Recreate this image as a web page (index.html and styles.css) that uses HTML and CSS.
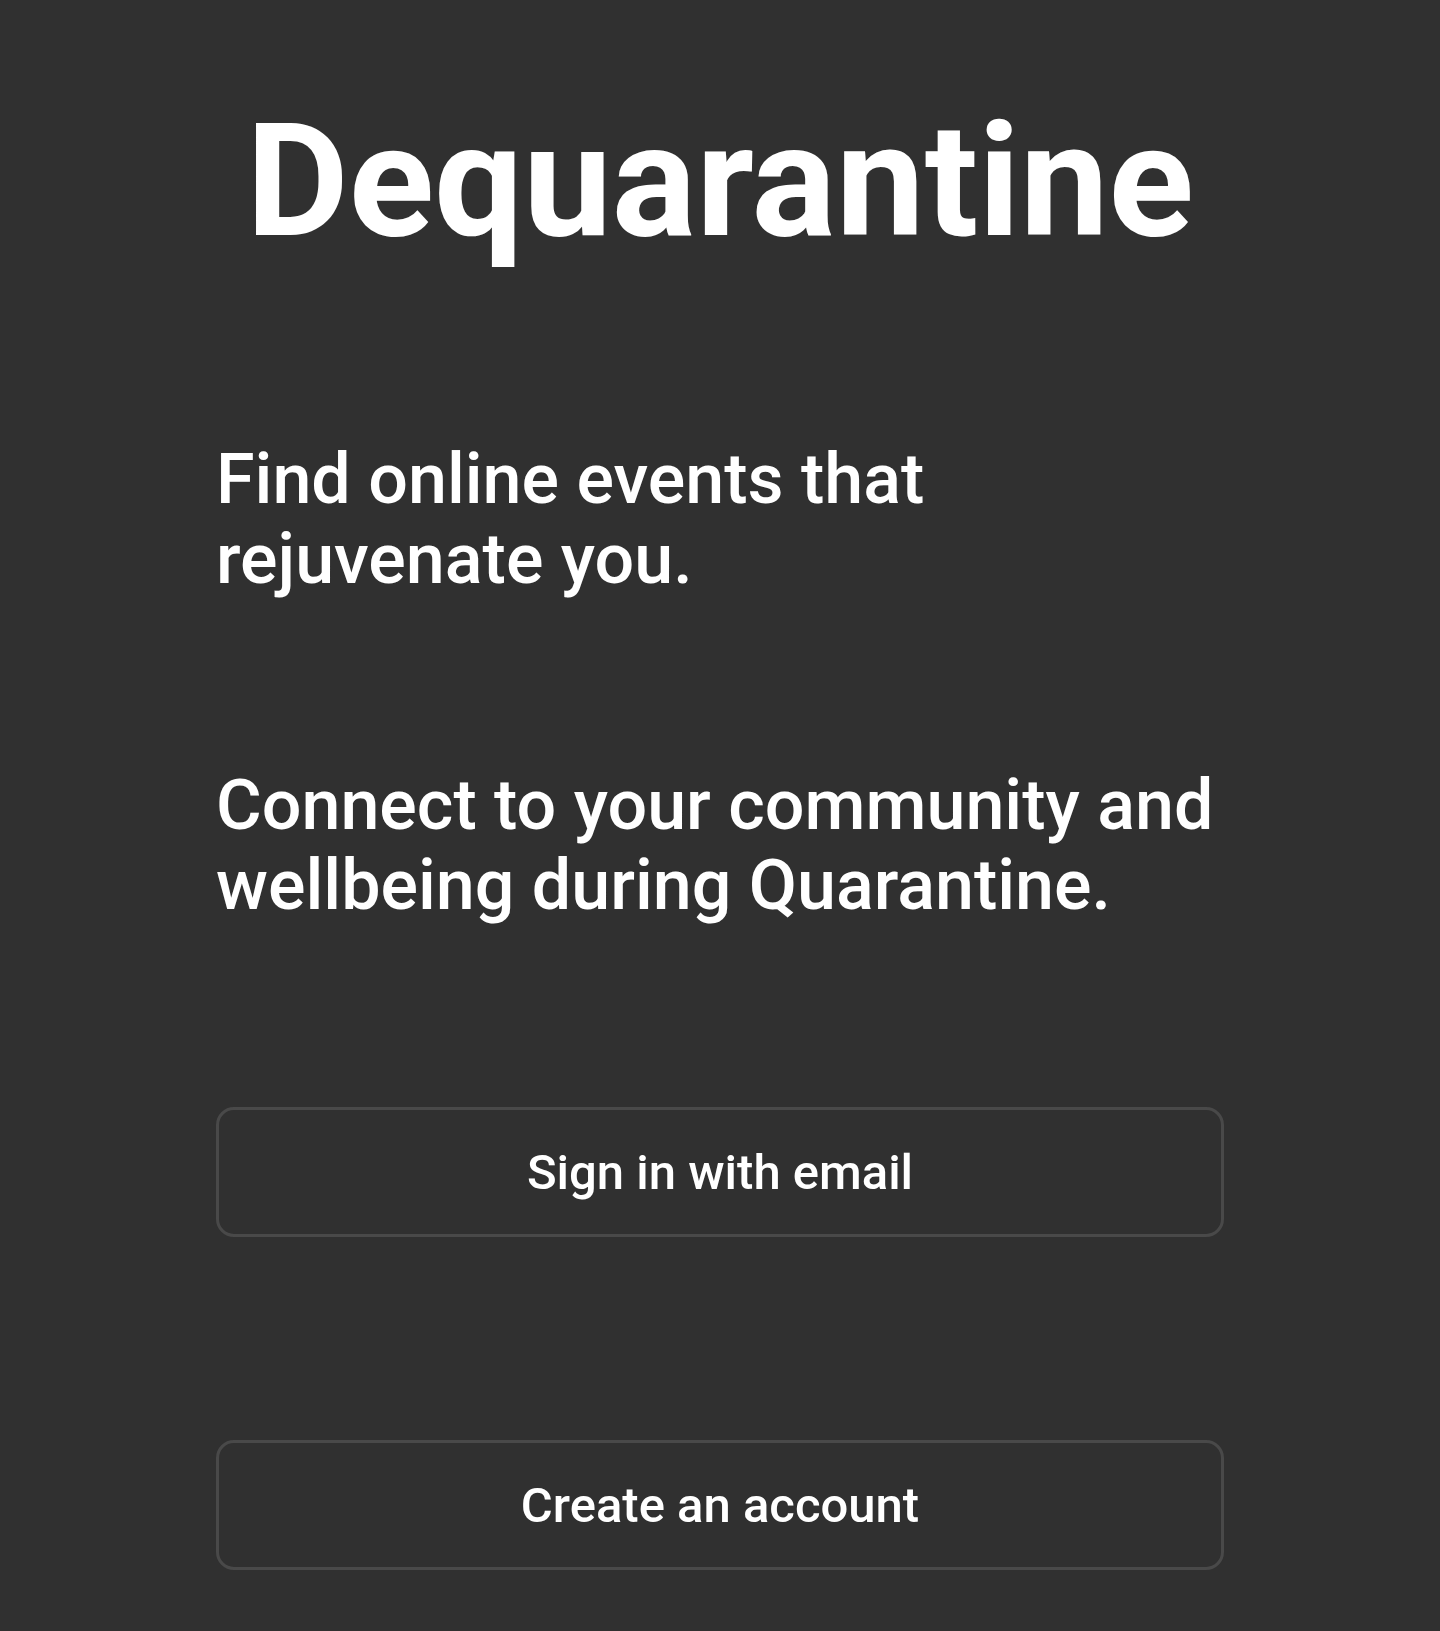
FILE: index.html
```html
<!DOCTYPE html>
<html lang="en">
<head>
<meta charset="utf-8">
<title>Dequarantine</title>
<link rel="stylesheet" href="styles.css">
</head>
<body>
<main class="page">
  <h1 class="title">Dequarantine</h1>
  <p class="lead lead-first">Find online events that<br>rejuvenate you.</p>
  <p class="lead lead-second">Connect to your community and<br>wellbeing during Quarantine.</p>
  <button class="btn btn-signin" type="button">Sign in with email</button>
  <button class="btn btn-create" type="button">Create an account</button>
</main>
</body>
</html>
```
FILE: styles.css
```css
html, body {
  margin: 0;
  padding: 0;
  background: #303030;
}
body {
  min-height: 1631px;
  font-family: Roboto, "Noto Sans", "Liberation Sans", sans-serif;
  color: #ffffff;
}
.page {
  width: 1008px;
  margin: 0 auto;
  padding-top: 101px;
  display: flex;
  flex-direction: column;
}
.title {
  margin: 0;
  font-size: 158px;
  line-height: 160px;
  font-weight: 700;
  text-align: center;
}
.lead {
  margin: 0;
  font-size: 70px;
  line-height: 80px;
  font-weight: 500;
  white-space: nowrap;
}
.lead-first {
  margin-top: 178px;
}
.lead-second {
  margin-top: 166px;
}
.btn {
  box-sizing: border-box;
  width: 100%;
  height: 130px;
  background: transparent;
  border: 3px solid #494949;
  border-radius: 18px;
  color: #ffffff;
  font-family: Roboto, "Noto Sans", "Liberation Sans", sans-serif;
  font-size: 49px;
  font-weight: 500;
  padding: 0;
}
.btn-signin {
  margin-top: 182px;
}
.btn-create {
  margin-top: 203px;
}
```
